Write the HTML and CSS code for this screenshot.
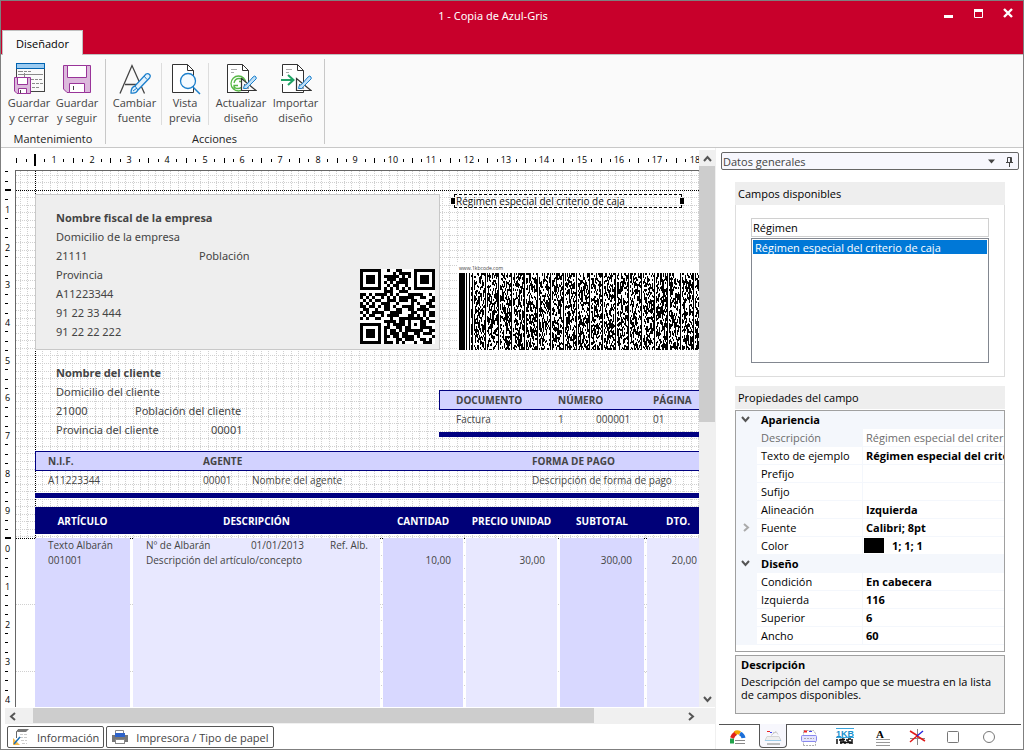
FILE: index.html
```
<!DOCTYPE html>
<html lang="es">

<head>
  <meta charset="utf-8">
  <title>1 - Copia de Azul-Gris</title>
  <link rel="stylesheet" href="styles.css">
</head>

<body>
  <div class="window">
    <header class="titlebar">
      <h1 class="title">1 - Copia de Azul-Gris</h1>
      <div class="window-buttons">
        <button type="button" aria-label="Minimizar"><svg width="12" height="12"><path d="M2 10.500h9" stroke="#fff" stroke-width="3" /></svg></button>
        <button type="button" aria-label="Maximizar"><svg width="12" height="12"><path d="M2.500 3v8.500h8V3" fill="none" stroke="#fff" /><path d="M2 4.500h9" stroke="#fff" stroke-width="3" /></svg></button>
        <button type="button" aria-label="Cerrar"><svg width="12" height="12"><path d="M2 3l8 8M10 3l-8 8" stroke="#fff" stroke-width="2.400" /></svg></button>
      </div>
      <button type="button" class="ribbon-tab">Diseñador</button>
    </header>

    <div class="ribbon">
      <section class="ribbon-group">
        <div class="ribbon-items">
          <button type="button" class="tool save">
            <svg width="32" height="32">
              <rect x="3.500" y="1.500" width="28" height="27" fill="#fafafa" stroke="#444" />
              <rect x="3.500" y=".5" width="28" height="5" fill="#9bcbf1" stroke="#0063b1" />
              <path d="M5 8.500h5M11 8.500h3M15 8.500h3M5 11.500h25M17 16.500h4M22 16.500h3M26 16.500h3M19 20.500h3M23 20.500h3M27 20.500h3M19 24.500h3M23 24.500h3" stroke="#8a8a8a" />
              <path d="M11.500 10v5" stroke="#8a8a8a" />
              <path d="M1.500 14.500h16v16H4l-2.500-2.500z" fill="#dcb9dc" stroke="#993499" />
              <path d="M4.500 14.500v7h10v-7z" fill="#fff" stroke="#993499" />
              <path d="M5.500 30.500v-5h8v5z" fill="#fff" stroke="#993499" />
              <path d="M7.500 27v3" stroke="#444" />
            </svg>
            <span>Guardar<br>y cerrar</span>
          </button>
          <button type="button" class="tool save">
            <svg width="32" height="32">
              <path d="M2.500 2.500h27v27H6l-3.500-3.500z" fill="#dcb9dc" stroke="#993499" />
              <path d="M6.500 2.500v12h19v-12z" fill="#fff" stroke="#993499" />
              <path d="M8.500 29.500v-9h15v9z" fill="#fff" stroke="#993499" />
              <path d="M12.500 23v4" stroke="#444" />
            </svg>
            <span>Guardar<br>y seguir</span>
          </button>
        </div>
        <h2 class="ribbon-label">Mantenimiento</h2>
      </section>
      <section class="ribbon-group">
        <div class="ribbon-items">
          <button type="button" class="tool font">
            <svg width="32" height="32" fill="none">
              <path d="M1 30.500L13 2.500l12.500 28M6 21.500h15" stroke="#444" stroke-width="1.300" />
              <path d="M12 30q0-6 4-7L27 11q2-1 3.500.5t0 3.500L19 27q-2 4-7 3z" fill="#e3f1fc" stroke="#1b7fcc" stroke-width="1.300" />
              <path d="M16 23l3 4M25 13l3 3.500M14 28l4-3" stroke="#1b7fcc" />
            </svg>
            <span>Cambiar<br>fuente</span>
          </button>
          <button type="button" class="tool preview">
            <svg width="32" height="32" fill="none">
              <path d="M3.500 1.500h15l6 6v22h-21z" fill="#fff" stroke="#333" />
              <path d="M18.500 1.500v6h6" stroke="#333" />
              <circle cx="19" cy="18" r="7.500" fill="#f4faff" stroke="#1b7fcc" stroke-width="1.300" />
              <path d="M24 24l7 7" stroke="#1b7fcc" stroke-width="1.500" />
            </svg>
            <span>Vista<br>previa</span>
          </button>
          <button type="button" class="tool update">
            <svg width="32" height="32" fill="none">
              <path d="M2.500 30V1.500h15l6 6v22h-21" fill="#fff" stroke="#333" />
              <path d="M17.500 1.500v6h6" stroke="#333" />
              <path d="M6 6.500h6M6 9.500h3" stroke="#aaa" />
              <circle cx="13.500" cy="20.500" r="7.500" stroke="#57b845" stroke-width="1.300" />
              <path d="M9 20q1-4.500 5-4.500t4 3M14 18.500h4v-4M18 21.500q-1 4-5 4t-4-3M13 22.500H9v4" stroke="#57b845" stroke-width="1.300" />
              <path d="M16.500 15.500v12h14.500z" fill="#fafafa" stroke="#333" stroke-width="1.200" />
              <path d="M19.500 21.500v3.500h4z" fill="#fff" stroke="#333" />
              <path d="M18.500 25.500q0-4 3-4L28 14q2-2 3 0t-1 3l-6.500 6.500q-1 3-5 2z" fill="#bfe0f8" stroke="#1b7fcc" />
            </svg>
            <span>Actualizar<br>diseño</span>
          </button>
          <button type="button" class="tool">
            <svg width="32" height="32" fill="none">
              <path d="M2.500 13V1.500h15l6 6v22h-21V21" fill="#fff" stroke="#333" />
              <path d="M17.500 1.500v6h6" stroke="#333" />
              <path d="M6 6.500h6M6 9.500h3" stroke="#aaa" />
              <path d="M1 17h12M8 12l5.500 5L8 22" stroke="#21a366" stroke-width="2" />
              <path d="M16.500 15.500v12h14.500z" fill="#fafafa" stroke="#333" stroke-width="1.200" />
              <path d="M19.500 21.500v3.500h4z" fill="#fff" stroke="#333" />
              <path d="M18.500 25.500q0-4 3-4L28 14q2-2 3 0t-1 3l-6.500 6.500q-1 3-5 2z" fill="#bfe0f8" stroke="#1b7fcc" />
            </svg>
            <span>Importar<br>diseño</span>
          </button>
        </div>
        <h2 class="ribbon-label">Acciones</h2>
      </section>
    </div>

    <div class="content">
      <main class="workspace">
        <div class="editor">
          <div class="canvas">
            <svg class="ruler-h" id="rulerH"></svg>
            <svg class="ruler-v" id="rulerV"></svg>
            <div class="sheet">
              <svg class="grid-lines" id="gridLines"></svg>

              <div class="header-band">
                <div class="company">
                  <strong>Nombre fiscal de la empresa</strong>
                  <span>Domicilio de la empresa</span>
                  <div class="line"><span class="company-zip">21111</span><span>Población</span></div>
                  <span>Provincia</span>
                  <span>A11223344</span>
                  <span>91 22 33 444</span>
                  <span>91 22 22 222</span>
                  <svg class="qr" id="qr" width="75" height="75" viewBox="0 0 25 25" shape-rendering="crispEdges"></svg>
                </div>
                <div class="selected-field">Régimen especial del criterio de caja</div>
                <div class="kb-code">
                  <span>www.1kbcode.com</span>
                  <svg id="kbCode" width="260" height="77" shape-rendering="crispEdges"></svg>
                </div>
                <div class="client">
                  <strong>Nombre del cliente</strong>
                  <span>Domicilio del cliente</span>
                  <div class="line"><span class="client-zip">21000</span><span>Población del cliente</span></div>
                  <div class="line"><span class="client-state">Provincia del cliente</span><span>00001</span></div>
                </div>
                <table class="strip document">
                  <tr><th class="doc-type">DOCUMENTO</th><th class="doc-series">NÚMERO</th><th class="doc-number"></th><th>PÁGINA</th></tr>
                  <tr><td>Factura</td><td>1</td><td>000001</td><td>01</td></tr>
                </table>
                <table class="strip agent">
                  <tr><th class="nif">N.I.F.</th><th class="agent-code">AGENTE</th><th class="agent-name"></th><th>FORMA DE PAGO</th></tr>
                  <tr><td>A11223344</td><td>00001</td><td>Nombre del agente</td><td>Descripción de forma de pago</td></tr>
                </table>
                <div class="columns-title">
                  <span class="col-item">ARTÍCULO</span>
                  <span class="col-text">DESCRIPCIÓN</span>
                  <span class="col-qty">CANTIDAD</span>
                  <span class="col-price">PRECIO UNIDAD</span>
                  <span class="col-sub">SUBTOTAL</span>
                  <span class="col-dto">DTO.</span>
                </div>
              </div>

              <div class="detail-band">
                <div class="col col-item"><span>Texto Albarán</span><span>001001</span></div>
                <div class="col col-text">
                  <div class="line"><span class="note">Nº de Albarán</span><span class="date">01/01/2013</span><span>Ref. Alb.</span></div>
                  <span>Descripción del artículo/concepto</span>
                </div>
                <div class="col col-qty number">10,00</div>
                <div class="col col-price number">30,00</div>
                <div class="col col-sub number">300,00</div>
                <div class="col col-dto number">20,00</div>
              </div>
            </div>
          </div>
          <div class="scroll-v">
            <button type="button" aria-label="Subir"><svg width="11" height="11"><path d="M2 8l3.500-4L9 8" /></svg></button>
            <div class="thumb"></div>
            <button type="button" aria-label="Bajar"><svg width="11" height="11"><path d="M2 3l3.500 4L9 3" /></svg></button>
          </div>
        </div>
        <div class="scroll-h">
          <button type="button" aria-label="Izquierda"><svg width="11" height="11"><path d="M7 2L3 5.500 7 9" /></svg></button>
          <div class="track"><div class="thumb"></div></div>
          <button type="button" aria-label="Derecha"><svg width="11" height="11"><path d="M4 2l4 3.500L4 9" /></svg></button>
        </div>
        <div class="bottom-buttons">
          <button type="button">
            <svg width="18" height="18">
              <path d="M4.500 10V4q0-1 1.500-2" fill="none" stroke="#666" />
              <path d="M6 1h11l-3 3H5z" fill="#777" />
              <path d="M8 6.500h7M8 9.500h7M9 12.500h6M10 15.500h5" stroke="#ccc" stroke-dasharray="3 1" />
              <path d="M1 10v7h7z" fill="#f6b94a" />
              <path d="M2 16l6-7" stroke="#1b6fb5" stroke-width="1.500" />
            </svg>
            Información
          </button>
          <button type="button">
            <svg width="18" height="18">
              <path d="M4.500 6V2.500h8V6" fill="#fff" stroke="#888" />
              <rect x="1" y="7" width="16" height="7" fill="#777" />
              <rect x="4" y="5" width="10" height="4" fill="#2d62c9" />
              <rect x="4.500" y="11.500" width="9" height="4" fill="#fff" stroke="#888" />
            </svg>
            Impresora / Tipo de papel
          </button>
        </div>
      </main>

      <aside class="dock">
        <div class="dock-title">
          <span>Datos generales</span>
          <button type="button" aria-label="Opciones"><svg width="9" height="9"><path d="M1 2.500h7L4.500 6.500z" fill="#444" /></svg></button>
          <button type="button" aria-label="Fijar"><svg width="9" height="11" fill="none" stroke="#444"><path d="M2.500 6V1.500h4V6M5.500 1v5M1 6.500h7M4.500 7v4" /></svg></button>
        </div>
        <div class="dock-body">
          <section class="fields">
            <h2 class="group-title"><label for="search">Campos disponibles</label></h2>
            <div class="fields-box">
              <input id="search" type="text" value="Régimen">
              <select size="7" aria-label="Campos">
                <option selected>Régimen especial del criterio de caja</option>
              </select>
            </div>
          </section>
          <section class="properties">
            <h2 class="group-title">Propiedades del campo</h2>
            <div class="property-grid">
              <table>
                <colgroup>
                  <col class="w-gutter">
                  <col class="w-name">
                  <col>
                </colgroup>
                <tr class="category"><td class="gutter"><button type="button" aria-label="Contraer"><svg width="11" height="11"><path d="M2 3l3.500 4L9 3" /></svg></button></td><th colspan="2">Apariencia</th></tr>
                <tr class="readonly"><td class="gutter"></td><th>Descripción</th><td>Régimen especial del criterio de caja</td></tr>
                <tr><td class="gutter"></td><th>Texto de ejemplo</th><td>Régimen especial del criterio de caja</td></tr>
                <tr><td class="gutter"></td><th>Prefijo</th><td></td></tr>
                <tr><td class="gutter"></td><th>Sufijo</th><td></td></tr>
                <tr><td class="gutter"></td><th>Alineación</th><td>Izquierda</td></tr>
                <tr><td class="gutter closed"><button type="button" aria-label="Expandir"><svg width="11" height="11"><path d="M4 2l4 3.500L4 9" /></svg></button></td><th>Fuente</th><td>Calibri; 8pt</td></tr>
                <tr><td class="gutter"></td><th>Color</th><td class="color"><i class="swatch"></i>1; 1; 1</td></tr>
                <tr class="category"><td class="gutter"><button type="button" aria-label="Contraer"><svg width="11" height="11"><path d="M2 3l3.500 4L9 3" /></svg></button></td><th colspan="2">Diseño</th></tr>
                <tr><td class="gutter"></td><th>Condición</th><td>En cabecera</td></tr>
                <tr><td class="gutter"></td><th>Izquierda</th><td>116</td></tr>
                <tr><td class="gutter"></td><th>Superior</th><td>6</td></tr>
                <tr><td class="gutter"></td><th>Ancho</th><td>60</td></tr>
              </table>
            </div>
            <div class="help">
              <strong>Descripción</strong>
              <p>Descripción del campo que se muestra en la lista de campos disponibles.</p>
            </div>
          </section>
        </div>
        <nav class="dock-tabs">
          <button type="button" aria-label="Colores"><svg width="18" height="18" fill="none"><path d="M4 15.500V10.500" stroke="#21a34a" stroke-width="4" /><path d="M4 10q1-3 4-5" stroke="#e0221b" stroke-width="4" /><path d="M7 5q2-1.500 5 0" stroke="#f2a500" stroke-width="4" /><path d="M12 5.500q3 1.500 3.500 4.500" stroke="#1c6fd8" stroke-width="4" /><path d="M7 12.500h10M7 15.500h10" stroke="#888" /></svg></button>
          <button type="button" class="active" aria-label="Datos generales"><svg width="18" height="18" fill="none"><path d="M3 4.500h3" stroke="#e22" /><path d="M6 5.500h2" stroke="#44e" /><path d="M9 5.500h3M7 8.500l5-4 2 3" stroke="#ccc" /><path d="M3 9.500h12l2 4H1z" fill="#eee" stroke="#d4d4d4" /><path d="M1 13.500h16" stroke="#9ccbe8" /><path d="M3 17h13" stroke="#bbb" stroke-width="2" /></svg></button>
          <button type="button" aria-label="Secciones"><svg width="18" height="18" fill="none"><path d="M3.500 17.500V2.500h10l2 3v12z" fill="#fff" stroke="#aaa" stroke-dasharray="2 1" /><path d="M4 3.500h3" stroke="#e22" stroke-width="2" /><path d="M9 3.500h3" stroke="#44e" /><rect x="1.500" y="7.500" width="15" height="6" rx="1" fill="#e3e3ff" stroke="#8888ee" /><path d="M4 10.500h10" stroke="#aaa" stroke-dasharray="2 1" /></svg></button>
          <button type="button" aria-label="Código 1KB"><svg width="18" height="18"><path d="M0 .5h18M0 9.500h18" stroke="#3aa5dd" /><text class="kb-text" x="0" y="9">1KB</text><path d="M1 11v5M3 12h2v4M6 11h1v3h2v2M10 12h2v2h2v2M16 11v5M4 11.500h5M12 11h3M4 14.500h12" fill="none" stroke="#111" stroke-width="1.500" /></svg></button>
          <button type="button" aria-label="Texto"><svg width="18" height="18"><text class="a-text" x="4" y="10">A</text><path d="M4 11.500h14M4 14.500h14M4 17.500h14" stroke="#999" /></svg></button>
          <button type="button" aria-label="Líneas"><svg width="18" height="18" fill="none"><path d="M9.500 1v16M2 10.500h15" stroke="#888" /><path d="M2 3l8 5" stroke="#e01818" stroke-width="1.500" /><path d="M9 8l8 5" stroke="#e01818" stroke-width="1.500" /><path d="M9 8l6-5" stroke="#2222dd" stroke-width="1.300" /><path d="M2 14l7-6" stroke="#e01818" stroke-width="1.500" /></svg></button>
          <button type="button" aria-label="Rectángulo"><svg width="18" height="18"><rect x="3.500" y="3.500" width="11" height="11" rx="1" fill="none" stroke="#777" /></svg></button>
          <button type="button" aria-label="Elipse"><svg width="18" height="18"><circle cx="9" cy="9" r="5.500" fill="none" stroke="#777" /></svg></button>
        </nav>
      </aside>
    </div>
  </div>
  <script src="script.js"></script>
</body>

</html>
```

FILE: styles.css
```
* {
  box-sizing: border-box;
}

body {
  margin: 0;
  font-family: "Open Sans", "Noto Sans", sans-serif;
  font-size: 11px;
  line-height: 15px;
  color: #000;
}

button {
  font: inherit;
  color: inherit;
  background: none;
  border: 0;
  padding: 0;
}

h1,
h2,
p {
  margin: 0;
  font-size: inherit;
  font-weight: normal;
}

.window {
  display: flex;
  flex-direction: column;
  height: 100vh;
  min-height: 750px;
  border: 1px solid #7f7f7f;
  background: #fff;
}

/* Title bar */
.titlebar {
  display: grid;
  grid-template-columns: 1fr auto 1fr;
  grid-template-rows: 29px 24px;
  background: #c8002b;
  border-bottom: 1px solid #c0c0c0;
  height: 54px;
}

.title {
  grid-column: 2;
  color: #fff;
  font-family: "Noto Sans", sans-serif;
  line-height: 29px;
  padding-right: 38px;
}

.window-buttons {
  display: flex;
  justify-content: flex-end;
  align-items: flex-start;
  gap: 18px;
  padding: 5px 9px 0 0;
}

.window-buttons svg {
  display: block;
}

.ribbon-tab {
  grid-row: 2;
  grid-column: 1;
  width: 81px;
  height: 25px;
  margin-left: 1px;
  background: #fafafa;
  border: 1px solid #c0c0c0;
  border-bottom: 0;
}

/* Ribbon */
.ribbon {
  display: flex;
  height: 93px;
  padding: 4px 4px 3px;
  background: #fafafa;
  border-bottom: 1px solid #c8c8c8;
  color: #444;
}

.ribbon-group {
  display: flex;
  flex-direction: column;
  justify-content: space-between;
  border-right: 1px solid #c8c8c8;
  padding: 4px 3px 0 2px;
}

.ribbon-group:first-child {
  padding: 4px 4px 0 0;
}

.ribbon-items {
  display: flex;
}

.tool {
  width: 51px;
  text-align: center;
}

.tool svg {
  display: block;
  margin: 0 auto;
}

.tool.save {
  width: 48px;
}

.tool.font {
  width: 54px;
  border-right: 1px solid #ddd;
}

.tool.preview {
  width: 47px;
  border-right: 1px solid #ddd;
}

.tool.update {
  width: 58px;
  margin-left: 3px;
}

.ribbon-label {
  text-align: center;
  line-height: 11px;
  color: #222;
}

/* Workspace */
.content {
  display: flex;
  flex: 1;
  min-height: 0;
}

.workspace {
  display: flex;
  flex-direction: column;
  flex: 1;
  min-width: 0;
  padding-left: 4px;
}

.editor {
  display: flex;
  flex: 1;
  min-height: 0;
  padding-top: 2px;
}

.canvas {
  flex: 1;
  min-width: 0;
  display: grid;
  grid-template-columns: 10px 1fr;
  grid-template-rows: 20px 1fr;
  overflow: hidden;
}

.ruler-h,
.ruler-v {
  width: 100%;
  height: 100%;
  font-size: 9px;
}

.ruler-h {
  grid-column: 1 / 3;
}

.sheet {
  position: relative;
  display: flex;
  flex-direction: column;
  overflow: hidden;
  border-left: 1px solid #666;
  border-top: 1px solid #666;
  color: #444;
  white-space: nowrap;
}

.grid-lines {
  position: absolute;
  width: 100%;
  height: 100%;
}

.header-band {
  position: relative;
  height: 367px;
  flex: none;
}

.line {
  display: flex;
}

/* Report objects are placed freely on the sheet */
.company,
.client {
  position: absolute;
  left: 19px;
  display: flex;
  flex-direction: column;
  padding-left: 20px;
  font-family: "Noto Sans", sans-serif;
  line-height: 19px;
}

.company strong,
.client strong {
  font-family: "Open Sans", sans-serif;
}

.company {
  top: 23px;
  width: 405px;
  height: 156px;
  padding-top: 13px;
  background: #eee;
  border: 1px solid #c8c8c8;
}

.company-zip {
  width: 143px;
}

.qr {
  position: absolute;
  right: 4px;
  bottom: 5px;
}

.client {
  top: 192px;
  padding-left: 21px;
}

.client-zip {
  width: 79px;
}

.client-state {
  width: 155px;
}

.selected-field {
  position: absolute;
  left: 438px;
  top: 23px;
  width: 228px;
  height: 14px;
  padding-left: 1px;
  border: 1px dashed #000;
  font-size: 10px;
  line-height: 12px;
  color: #111;
}

.selected-field::before,
.selected-field::after {
  content: "";
  position: absolute;
  top: 3px;
  left: -4px;
  width: 4px;
  height: 6px;
  background: #000;
}

.selected-field::after {
  left: auto;
  right: -3px;
}

.kb-code {
  position: absolute;
  left: 441px;
  top: 91px;
  padding: 2px;
  background: #fff;
  font-size: 5px;
  line-height: 9px;
}

.kb-code span,
.kb-code svg {
  display: block;
}

.strip {
  position: absolute;
  width: 700px;
  border-collapse: separate;
  border-spacing: 0;
  table-layout: fixed;
  border-bottom: 5px solid #000080;
  font-size: 10px;
}

.strip th {
  height: 20px;
  padding: 0;
  background: #d2d2ff;
  border: solid #000080;
  border-width: 1px 0;
  text-align: left;
  line-height: 18px;
}

.strip th:first-child {
  border-left-width: 1px;
}

.strip td {
  height: 22px;
  padding: 0 0 4px;
}

.document {
  left: 423px;
  top: 219px;
}

.document th:first-child {
  padding-left: 16px;
}

.document td:first-child {
  padding-left: 17px;
}

.doc-type {
  width: 119px;
}

.doc-series {
  width: 38px;
}

.doc-number {
  width: 57px;
}

.agent {
  left: 19px;
  top: 280px;
}

.agent th:first-child {
  padding-left: 12px;
}

.agent td:first-child {
  padding-left: 13px;
}

.nif {
  width: 168px;
}

.agent-code {
  width: 49px;
}

.agent-name {
  width: 280px;
}

.columns-title {
  position: absolute;
  left: 19px;
  top: 336px;
  display: flex;
  gap: 3px;
  height: 27px;
  background: #000078;
  color: #fff;
  font-size: 10px;
  font-weight: bold;
  line-height: 28px;
  text-align: center;
}

.col-item {
  width: 95px;
}

.col-text {
  width: 247px;
}

.col-qty {
  width: 80px;
}

.col-price {
  width: 91px;
}

.col-sub {
  width: 84px;
}

.col-dto {
  width: 62px;
}

.detail-band {
  position: relative;
  display: flex;
  flex: 1;
  gap: 3px;
  margin-left: 19px;
  font-size: 10px;
}

.col {
  display: flex;
  flex-direction: column;
  flex: none;
  padding: 0 12px 0 13px;
  background: #d8d8ff;
}

.col:nth-child(even) {
  background: #e8e8ff;
}

.number {
  padding-top: 15px;
  text-align: right;
}

.note {
  width: 106px;
}

.date {
  width: 80px;
}

/* Scroll bars */
.scroll-v,
.scroll-h {
  display: flex;
  background: #f0f0f0;
}

.scroll-v {
  flex-direction: column;
  width: 16px;
}

.scroll-v button,
.scroll-h button {
  flex: none;
  width: 16px;
  height: 16px;
}

.scroll-v svg,
.scroll-h svg,
.gutter svg {
  display: block;
  margin: 0 auto;
  fill: none;
  stroke: #555;
  stroke-width: 2;
}

.scroll-v .thumb {
  height: 46%;
  margin-bottom: auto;
  background: #cdcdcd;
}

.scroll-h {
  height: 16px;
  margin-top: 1px;
}

.track {
  flex: 1;
  padding: 0 11px 0 12px;
}

.scroll-h .thumb {
  width: 88%;
  height: 15px;
  background: #cdcdcd;
}

.scroll-h button:last-child {
  margin-right: 17px;
}

.bottom-buttons {
  display: flex;
  gap: 2px;
  padding: 2px 2px 1px;
}

.bottom-buttons button {
  display: flex;
  align-items: center;
  gap: 7px;
  height: 22px;
  padding: 0 4px;
  border: 1px solid #555;
  border-radius: 2px;
  color: #444;
}

/* Dock */
.dock {
  display: flex;
  flex-direction: column;
  width: 308px;
  padding-top: 4px;
  border-left: 1px solid #f0f0f0;
}

.dock-title {
  display: flex;
  align-items: center;
  gap: 9px;
  height: 18px;
  margin: 0 4px 0 5px;
  padding: 0 4px 0 1px;
  border: 1px solid #666;
  border-radius: 2px;
  background: #f7f7fd;
  color: #444;
}

.dock-title span {
  flex: 1;
}

.dock-title svg {
  display: block;
}

.dock-body {
  flex: 1;
  padding: 12px 18px 0 19px;
}

.group-title {
  height: 23px;
  padding-left: 3px;
  background: #eee;
  line-height: 23px;
}

.fields-box {
  height: 172px;
  padding: 13px 15px;
  border: 1px solid #ddd;
  border-top: 0;
}

.fields-box input,
.fields-box select {
  display: block;
  width: 100%;
  font: inherit;
  color: #000;
  border: 1px solid #d0d0d0;
}

.fields-box input {
  height: 19px;
  padding: 0 1px;
}

.fields-box select {
  height: 125px;
  margin-top: 1px;
  padding: 1px;
  border-color: #828790;
  border-radius: 0;
  overflow: hidden;
}

.fields-box option {
  min-height: 0;
  height: 14px;
  padding: 0 2px;
  line-height: 13px;
}

.fields-box option:checked {
  background: #0078d7 linear-gradient(#0078d7, #0078d7);
  color: #fff;
}

.properties {
  margin-top: 9px;
}

.property-grid {
  height: 242px;
  margin-top: 1px;
  border: 1px solid #a0a0a0;
  overflow: hidden;
}

.property-grid table {
  width: 100%;
  border-collapse: separate;
  border-spacing: 0;
  table-layout: fixed;
}

.w-gutter {
  width: 21px;
}

.w-name {
  width: 105px;
}

.property-grid th,
.property-grid td {
  height: 18px;
  padding: 0 0 0 4px;
  border-bottom: 1px solid #f4f7fc;
  line-height: 17px;
  text-align: left;
  white-space: nowrap;
  overflow: hidden;
}

.property-grid th {
  font-weight: normal;
}

.property-grid td {
  border-left: 1px solid #f4f7fc;
  padding-left: 3px;
  font-weight: bold;
}

.property-grid .gutter {
  padding: 0 4px 0 0;
  background: #f4f7fc;
}

.gutter button {
  display: block;
  margin: 0 auto;
}

.property-grid .closed svg {
  stroke: #aaa;
}

.property-grid .category th {
  font-weight: bold;
  background: #f4f7fc;
}

.readonly th {
  color: #6d6d6d;
  background: #f4f7fc;
}

.property-grid .readonly td {
  color: #6d6d6d;
  font-weight: normal;
}

.property-grid .color {
  padding-left: 1px;
}

.swatch {
  display: inline-block;
  width: 20px;
  height: 15px;
  margin-right: 8px;
  background: #000;
  vertical-align: top;
  margin-top: 1px;
}

.help {
  height: 59px;
  margin-top: 3px;
  padding: 1px 5px;
  background: #f0f0f0;
  border: 1px solid #a0a0a0;
}

.help p {
  line-height: 13px;
  margin-top: 3px;
}

.dock-tabs {
  display: flex;
  gap: 8px;
  height: 25px;
  margin: 0 2px 0 3px;
  padding: 0 4px;
  border-top: 1px solid #555;
}

.dock-tabs button {
  width: 28px;
  height: 23px;
}

.dock-tabs svg {
  display: block;
  margin: 0 auto;
}

.dock-tabs .active {
  margin-top: -1px;
  height: 24px;
  background: #f7f7fd;
  border: 1px solid #555;
  border-top: 0;
  border-radius: 0 0 4px 4px;
}

.kb-text {
  font: bold 9px "Liberation Sans", sans-serif;
  fill: #1a8fcc;
}

.a-text {
  font: bold 11px "Liberation Serif", serif;
}
```

FILE: script.js
```
const STEP = 9.425 // quarter of a ruler unit

function drawRulers() {
  const rulerH = document.getElementById('rulerH')
  const width = rulerH.clientWidth
  let h = '<rect x="29" y="4" width="2" height="12"/>'
  for (let i = -2; 30 + i * STEP < width; i++) {
    const x = Math.round(30 + i * STEP)
    if (i === 0) continue
    if (i > 0 && i % 4 === 2) {
      h += `<text x="${x}" y="13" text-anchor="middle">${(i + 2) / 4}</text>`
    } else {
      const tall = i % 4 === 0 || i === -2
      h += `<rect x="${x}" y="${tall ? 8 : 9}" width="1" height="${tall ? 5 : 3}"/>`
    }
  }
  rulerH.innerHTML = h

  const rulerV = document.getElementById('rulerV')
  const height = rulerV.clientHeight
  let v = '<rect x="0" y="19" width="6" height="2"/><rect x="0" y="367" width="6" height="2"/>'
  for (let i = -2; 20 + i * STEP < height; i++) {
    const y = Math.round(20 + i * STEP)
    if (i === 0 || i === 37) continue
    if (i > 0 && i % 4 === 2) {
      v += `<text x="0" y="${y + 4}">${((i + 2) / 4) % 10}</text>`
    } else {
      v += `<rect x="0" y="${y}" width="3" height="1"/>`
    }
  }
  rulerV.innerHTML = v
}

function drawGrid() {
  let g = '<g stroke="#d0d0d0" stroke-dasharray="1 1" shape-rendering="crispEdges">'
  for (let x = 4; x < 1600; x += 7.54) {
    const px = Math.round(x + 0.5) - 0.5
    g += `<path d="M${px} 0V367"/>`
    g += `<path d="M${px} 371V900" stroke-dasharray="1 12"/>`
  }
  for (let y = 4; y < 366; y += 7.54) {
    const py = Math.round(y + 0.5) - 0.5
    g += `<path d="M0 ${py}H1600"/>`
  }
  g += '<path d="M0 433.500H1600M0 500.500H1600"/></g>'
  // the left margin of the detail band stays free of columns
  g += '<path d="M0 369h19v64H0zM0 434h19v66H0zM0 501h19v400H0z" fill="#fff"/>'
  g += '<path d="M19.500 0V367M0 19.500H1600M0 367.500H1600" stroke="#000" stroke-dasharray="1 1" shape-rendering="crispEdges"/>'
  document.getElementById('gridLines').innerHTML = g
}

function drawQr() {
  const rows = [
    '1111111001001100001111111',
    '1000001000010111101000001',
    '1011101011111010101011101',
    '1011101001110111001011101',
    '1011101010101111001011101',
    '1000001001011001001000001',
    '1111111010101010101111111',
    '0000000011100111000000000',
    '1101011110101000111110010',
    '1010100101010111110011001',
    '0101011001110111011000011',
    '1010100111001000010100110',
    '1101101011010011110011011',
    '0110010011001100110111100',
    '1010111100111100011001011',
    '0101100101111000110101011',
    '1010011000100111111110100',
    '0000000011110110100011011',
    '1111111001011110101011000',
    '1000001011001101100011110',
    '1011101010110101111110011',
    '1011101010111011001101110',
    '1011101011011011110100001',
    '1000001010001101110011010',
    '1111111011101010001001110'
  ]
  let d = ''
  rows.forEach((row, y) => {
    for (let x = 0; x < row.length; x++) {
      if (row[x] === '1') d += `M${x} ${y}h1v1h-1z`
    }
  })
  document.getElementById('qr').innerHTML = `<rect width="25" height="25" fill="#fff"/><path d="${d}"/>`
}

function drawKbCode() {
  let seed = 7
  const rand = () => {
    seed = (seed * 16807) % 2147483647
    return seed / 2147483647
  }
  let d = 'M0 0h6v77h-6zM7 0h1v77h-1zM10 0h1v77h-1z'
  for (let x = 12; x < 260; x++) {
    if (x % 13 === 0) {
      d += `M${x} 0h1v77h-1z`
      continue
    }
    if (x % 13 === 1) continue
    for (let y = 0; y < 77;) {
      const len = rand() < 0.7 ? 2 : 3
      if (rand() < 0.52) d += `M${x} ${y}h1v${Math.min(len, 77 - y)}h-1z`
      y += len
    }
  }
  document.getElementById('kbCode').innerHTML = `<path d="${d}"/>`
}

drawRulers()
drawGrid()
drawQr()
drawKbCode()
```
